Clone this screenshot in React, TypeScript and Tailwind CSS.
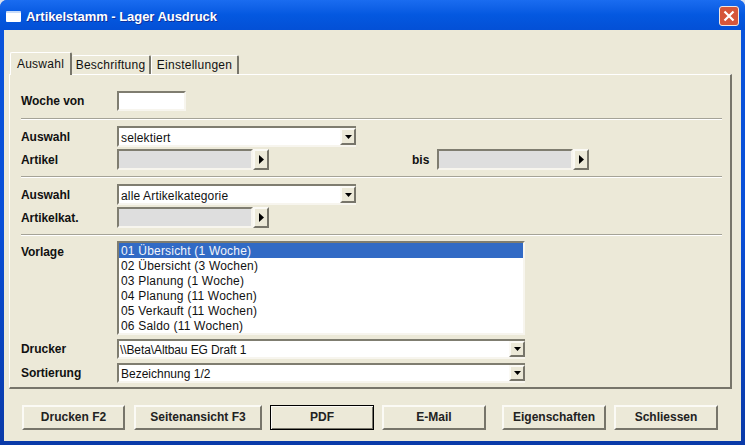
import React from 'react';

const sunken = 'border-2 border-t-[#7f7d70] border-l-[#7f7d70] border-b-[#f7f5ee] border-r-[#f7f5ee]';
const raised = 'border-2 border-t-[#fbfaf5] border-l-[#fbfaf5] border-b-[#77756a] border-r-[#77756a]';

const Label: React.FC<{ children: React.ReactNode }> = ({ children }) => (
  <div className="w-[96px] shrink-0 text-[12px] font-bold leading-none tracking-[-0.05px] text-[#111]">{children}</div>
);

const Separator = ({ className }: { className: string }) => (
  <div className={`h-[2px] w-[701px] border-t border-t-[#a5a397] border-b border-b-white ${className}`} />
);

const DownArrow = () => (
  <svg width="7" height="4" viewBox="0 0 7 4"><path d="M0 0h7L3.500 4z" fill="#000" /></svg>
);

const Dropdown = ({ value, box, text }: { value: string; box: string; text: string }) => (
  <div className={`flex ${box} ${sunken} border-r-0 bg-white`}>
    <div className={`flex-1 truncate text-[12px] leading-[17px] text-[#111] ${text}`}>{value}</div>
    <div className={`flex w-[16px] shrink-0 items-center justify-center bg-[#ece9d8] ${raised}`}>
      <DownArrow />
    </div>
  </div>
);

const Lookup = () => (
  <div className="flex h-[21px] w-[152px]">
    <div className={`w-[136px] ${sunken} bg-[#dedede]`} />
    <div className={`flex w-[16px] items-center justify-center bg-[#ece9d8] ${raised}`}>
      <svg width="5" height="9" viewBox="0 0 5 9"><path d="M0 0l5 4.500L0 9z" fill="#000" /></svg>
    </div>
  </div>
);

const templates = [
  '01 Übersicht (1 Woche)',
  '02 Übersicht (3 Wochen)',
  '03 Planung (1 Woche)',
  '04 Planung (11 Wochen)',
  '05 Verkauft (11 Wochen)',
  '06 Saldo (11 Wochen)',
];

const ActionButton = ({ label, width, margin, active }: { label: string; width: string; margin: string; active?: boolean }) => (
  <div
    className={`flex h-[25px] ${width} ${margin} items-center justify-center bg-[#ece9d8] pb-[1px] text-[12px] font-bold text-[#222] ${
      active ? 'border border-black shadow-[inset_1px_1px_0_#fbfaf5,inset_-1px_-1px_0_#77756a]' : raised
    }`}
  >
    {label}
  </div>
);

export default function App() {
  return (
    <div className="h-[445px] w-[745px] overflow-hidden bg-[#d8e0ee] font-['Liberation_Sans',Arial,sans-serif]">
      <div className="flex h-[445px] flex-col rounded-t-[7px] bg-gradient-to-b from-[#0a54dc] via-[#0a4fd8] to-[#0a3aa8]">
        {/* Title bar */}
        <div className="flex h-[30px] shrink-0 items-center justify-between rounded-t-[7px] bg-gradient-to-b from-[#1a6cf0] via-[#0458e0] to-[#0350d6] pl-[6px] pr-[6px] pt-[2px]">
          <div className="flex items-center gap-[5px]">
            <div className="h-[11px] w-[15px] rounded-[1px] border-t-2 border-t-[#c9dcf8] bg-white" />
            <span className="pt-[1px] text-[13px] font-bold tracking-[-0.05px] text-white [text-shadow:1px_1px_#0f2f9a]">
              Artikelstamm - Lager Ausdruck
            </span>
          </div>
          <div className="flex h-[20px] w-[20px] items-center justify-center rounded-[3px] border border-[#f0e6e0] bg-[#d5563a]">
            <svg width="12" height="12" viewBox="0 0 12 12">
              <path d="M1.500 1.500l9 9M10.500 1.500l-9 9" stroke="#fff" strokeWidth="2.200" />
            </svg>
          </div>
        </div>

        {/* Client area */}
        <div className="mx-[4px] mb-[4px] flex flex-1 flex-col bg-[#ece9d8] pt-[22px]">
          <div className="flex h-[22px] items-end pl-[6px] text-[12px] tracking-[0.25px] text-[#111]">
            <div className="relative z-10 -mb-[1px] flex h-[23px] w-[62px] items-center justify-center rounded-t-[2px] border-l border-t border-l-white border-t-white border-r-2 border-r-[#77756a] bg-[#ece9d8] pb-[1px]">
              Auswahl
            </div>
            <div className="flex h-[19px] w-[79px] items-center justify-center rounded-t-[2px] border-t border-t-white border-r-2 border-r-[#77756a] bg-[#ece9d8]">
              Beschriftung
            </div>
            <div className="flex h-[19px] w-[88px] items-center justify-center rounded-t-[2px] border-l border-t border-l-white border-t-white border-r-2 border-r-[#77756a] bg-[#ece9d8]">
              Einstellungen
            </div>
          </div>

          {/* Tab panel */}
          <div className="mx-[5px] h-[315px] w-[723px] border-l border-t border-l-white border-t-white border-r-2 border-b-2 border-r-[#77756a] border-b-[#77756a] pl-[11px] pt-[16px]">
            <div className="flex h-[20px] items-center">
              <Label>Woche von</Label>
              <div className={`h-[20px] w-[69px] ${sunken} bg-white`} />
            </div>
            <Separator className="mt-[7px]" />

            <div className="mt-[6px] flex h-[21px] items-center">
              <Label>Auswahl</Label>
              <Dropdown value="selektiert" box="h-[21px] w-[239px]" text="pl-[2px] pt-[2px] tracking-[0.15px]" />
            </div>
            <div className="mt-[2px] flex h-[21px] items-center">
              <Label>Artikel</Label>
              <Lookup />
              <div className="ml-[143px] w-[25px] text-[12px] font-bold text-[#111]">bis</div>
              <Lookup />
            </div>
            <Separator className="mt-[6px]" />

            <div className="mt-[6px] flex h-[21px] items-center">
              <Label>Auswahl</Label>
              <Dropdown value="alle Artikelkategorie" box="h-[21px] w-[239px]" text="pl-[2px] pt-[2px] tracking-[0.15px]" />
            </div>
            <div className="mt-[2px] flex h-[21px] items-center">
              <Label>Artikelkat.</Label>
              <Lookup />
            </div>
            <Separator className="mt-[6px]" />

            <div className="mt-[5px] flex h-[94px] items-start">
              <div className="pt-[5px]">
                <Label>Vorlage</Label>
              </div>
              <div className={`h-[94px] w-[408px] ${sunken} bg-white text-[12px] leading-[15px] tracking-[0.2px] text-[#111]`}>
                {templates.map((t, i) => (
                  <div key={t} className={`h-[15px] pl-[2px] pt-[1px] ${i === 0 ? 'bg-[#316ac5] text-[#f2f5fb]' : ''}`}>
                    {t}
                  </div>
                ))}
              </div>
            </div>

            <div className="mt-[4px] flex h-[20px] items-center">
              <Label>Drucker</Label>
              <Dropdown value="\\Beta\Altbau EG Draft 1" box="h-[20px] w-[408px]" text="pl-[1px] pt-[1px] tracking-[-0.1px]" />
            </div>
            <div className="mt-[4px] flex h-[20px] items-center">
              <Label>Sortierung</Label>
              <Dropdown value="Bezeichnung 1/2" box="h-[20px] w-[408px]" text="pl-[2px] pt-[1px]" />
            </div>
          </div>

          {/* Buttons */}
          <div className="mt-[16px] flex pl-[18px]">
            <ActionButton label="Drucken F2" width="w-[103px]" margin="" />
            <ActionButton label="Seitenansicht F3" width="w-[128px]" margin="ml-[9px]" />
            <ActionButton label="PDF" width="w-[104px]" margin="ml-[8px]" active />
            <ActionButton label="E-Mail" width="w-[104px]" margin="ml-[8px]" />
            <ActionButton label="Eigenschaften" width="w-[104px]" margin="ml-[16px]" />
            <ActionButton label="Schliessen" width="w-[104px]" margin="ml-[8px]" />
          </div>
        </div>
      </div>
    </div>
  );
}
